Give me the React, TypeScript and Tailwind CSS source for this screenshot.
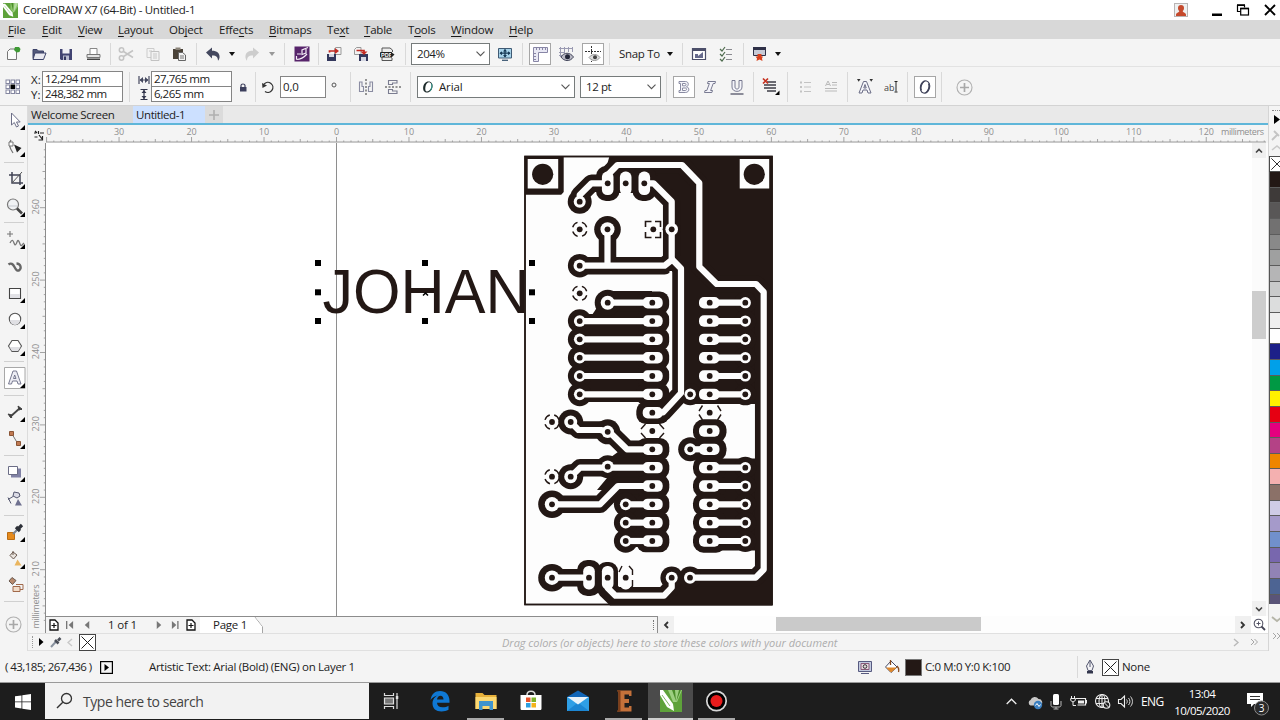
import React from "react";
import clsx from "clsx";

type BoxProps = {
  className?: string;
  children?: React.ReactNode;
};

/* small helpers ------------------------------------------------ */

const Cell = ({ className, children }: BoxProps) => (
  <div className={clsx("flex shrink-0 items-center justify-center", className)}>{children}</div>
);

const Sep = ({ className }: BoxProps) => (
  <div className={clsx("w-px shrink-0 bg-[#d9d9d9]", className)} />
);

const HSep = ({ className }: BoxProps) => (
  <div className={clsx("h-px w-5 shrink-0 bg-[#d0d0d0]", className)} />
);

const Ico = ({ s = 16, children }: { s?: number; children: React.ReactNode }) => (
  <svg width={s} height={s} viewBox={`0 0 ${s} ${s}`} fill="none" className="block shrink-0">
    {children}
  </svg>
);

const Caret = () => (
  <svg width="6" height="4" viewBox="0 0 6 4" className="block">
    <path d="M0 0h6L3 4z" fill="#111" />
  </svg>
);

const Chevron = () => (
  <svg width="9" height="6" viewBox="0 0 9 6" className="block" fill="none">
    <path d="M.5.7l4 4 4-4" stroke="#555" strokeWidth="1.1" />
  </svg>
);

const NoColor = ({ w = 17 }: { w?: number }) => (
  <svg width={w} height={w} viewBox="0 0 17 17" className="block shrink-0">
    <rect x=".5" y=".5" width="16" height="16" fill="#fff" stroke="#444" />
    <path d="M2.5 2.5l12 12M14.5 2.5l-12 12" stroke="#222" strokeWidth="1" />
  </svg>
);

// little black corner that marks a flyout
const Fly = () => <path d="M21 16v5h-5z" fill="#000" />;

const CorelLogo = ({ s }: { s: number }) => (
  <svg width={s} height={s} viewBox="0 0 22 22" className="block shrink-0">
    <rect width="22" height="22" fill="#5ea23a" />
    <path d="M11 0h11v5l-5 8-2 1-4-5z" fill="#8cc46a" />
    <path d="M17 0h5l-6 13h-1z" fill="#b5dba0" />
    <path d="M12 0h3v12z" fill="#4b8d2b" />
    <path d="M0 1l3 0 11 13 1 6-6-2L0 6z" fill="#fff" />
    <path d="M2 4l9 11" stroke="#8fbf72" strokeWidth=".8" />
  </svg>
);

/* title + menu -------------------------------------------------- */

const TitleBar = () => (
  <header className="flex h-5 shrink-0 items-center bg-white">
    <div className="ml-[3px] mt-px">
      <CorelLogo s={15} />
    </div>
    <span className="ml-[5px] text-[11.5px] tracking-[-0.28px] text-[#222]">
      CorelDRAW X7 (64-Bit) - Untitled-1
    </span>
    <div className="ml-auto flex items-center">
      <Cell className="w-4">
        <svg width="14" height="14" viewBox="0 0 14 14">
          <rect x=".5" y=".5" width="13" height="13" fill="#eef0f0" stroke="#b9b4b4" />
          <path d="M7 2c2 0 3 1.300 3 3 0 1.500-.6 2.500-1.300 3 .1 1.500 2.800 1.500 3.300 3.500V13H2v-1.500C2.500 9.500 5.200 9.500 5.300 8 4.600 7.500 4 6.500 4 5c0-1.700 1-3 3-3z" fill="#c5492c" />
        </svg>
      </Cell>
      <Cell className="ml-[18px] w-5">
        <svg width="12" height="14" viewBox="0 0 12 14">
          <path d="M1 10.500h10v2.500H1z" fill="#000" />
        </svg>
      </Cell>
      <Cell className="ml-2 w-4">
        <svg width="14" height="14" viewBox="0 0 14 14" fill="none" stroke="#000">
          <path d="M4.500 8.500h-3v-6h7v2" strokeWidth="1.200" />
          <path d="M1 2h8" strokeWidth="1.600" />
          <rect x="4.700" y="5.500" width="7.800" height="6.500" strokeWidth="1.200" />
          <path d="M4.200 5.500h8.800" strokeWidth="1.600" />
        </svg>
      </Cell>
      <Cell className="ml-[11px] mr-[2px] w-4">
        <svg width="12" height="12" viewBox="0 0 12 12" fill="none">
          <path d="M1 1l10 10M11 1L1 11" stroke="#000" strokeWidth="1.900" />
        </svg>
      </Cell>
    </div>
  </header>
);

// [before, underlined, after, width]
const menus: [string, string, string, string][] = [
  ["", "F", "ile", "w-[34px]"],
  ["", "E", "dit", "w-[36px]"],
  ["", "V", "iew", "w-[40px]"],
  ["", "L", "ayout", "w-[51px]"],
  ["Ob", "j", "ect", "w-[50px]"],
  ["Effe", "c", "ts", "w-[50px]"],
  ["", "B", "itmaps", "w-[58px]"],
  ["Te", "x", "t", "w-[37px]"],
  ["", "T", "able", "w-[44px]"],
  ["T", "o", "ols", "w-[43px]"],
  ["", "W", "indow", "w-[58px]"],
  ["", "H", "elp", "w-[40px]"],
];

const MenuBar = () => (
  <nav className="flex h-[19px] shrink-0 items-center bg-[#d8d8d8] pl-2 pt-px text-[11.5px] tracking-[-0.2px] text-[#1a1a1a]">
    {menus.map(([a, u, b, w]) => (
      <span key={a + u + b} className={clsx("shrink-0 whitespace-nowrap", w)}>
        {a}
        <span className="underline underline-offset-2">{u}</span>
        {b}
      </span>
    ))}
  </nav>
);

/* standard toolbar ---------------------------------------------- */

const StandardBar = () => (
  <div className="flex h-7 shrink-0 items-center border-b border-[#e2e2e2] bg-[#f4f4f4] pt-[3px] text-[11.5px] text-[#222]">
    <Cell className="w-[25px]">
      <Ico>
        <path d="M2.500 5.500L5 3h6.500v10.500h-9z" fill="#fbfbfb" stroke="#777" />
        <path d="M10 1h4l1.500 2-1 3-3 .5L9 4z" fill="#3f9a35" />
      </Ico>
    </Cell>
    <Cell className="w-[27px]">
      <Ico>
        <path d="M2 12.500V3.500h4l1.500 1.500h5v2" fill="#53597a" stroke="#3c4268" />
        <path d="M4 7h11l-2.500 6.500H2z" fill="#e9e9f0" stroke="#3c4268" />
      </Ico>
    </Cell>
    <Cell className="w-[27px]">
      <Ico>
        <path d="M2 3h12v11H3l-1-1z" fill="#414472" />
        <path d="M4.500 3h7v4.500h-7z" fill="#f0f0f5" />
        <path d="M5 9.500h6V14H5z" fill="#b9bcd0" />
        <path d="M6 10.500h2V14H6z" fill="#33365f" />
      </Ico>
    </Cell>
    <Cell className="w-[27px]">
      <Ico>
        <path d="M5 2.500h7v6H5z" fill="#fff" stroke="#888" />
        <path d="M2 8.500h13v3H2z" fill="#e5e5e5" stroke="#777" />
        <path d="M2 12.500h13v1.500H2z" fill="#444" />
      </Ico>
    </Cell>
    <Sep className="ml-1 h-[22px]" />
    <Cell className="w-[29px]">
      <Ico>
        <g stroke="#c4c4c4" strokeWidth="1.500">
          <circle cx="3.500" cy="4" r="2.200" />
          <circle cx="3.500" cy="12" r="2.200" />
          <path d="M5.500 5.500L15 11.500M5.500 10.500L15 4.500" />
        </g>
      </Ico>
    </Cell>
    <Cell className="w-[25px]">
      <Ico>
        <path d="M2 2.500h7v9H2z" stroke="#ccc" />
        <path d="M6 5.500h8v9H6z" fill="#f2f2f2" stroke="#c2c2c2" />
        <path d="M8 8h4M8 10h4M8 12h4M4 5h3" stroke="#c8c8c8" />
      </Ico>
    </Cell>
    <Cell className="w-[27px]">
      <Ico>
        <path d="M2 3h10v10H2z" fill="#4a4238" />
        <path d="M4.500 1.500h5v2.500h-5z" fill="#8a8378" />
        <path d="M7.500 6.500h4l3 2.500v5.500h-7z" fill="#f3f3f3" stroke="#666" />
        <path d="M9 10h4M9 12h4" stroke="#777" />
      </Ico>
    </Cell>
    <Sep className="ml-1 h-[22px]" />
    <Cell className="w-[31px]">
      <Ico>
        <path d="M1 6.500L7 1.500v3.200c5 0 8 2.300 7.500 7-.2 1.300-.8 2.300-1.500 3 0-4-2-5.500-6-5.300v3z" fill="#44485f" />
      </Ico>
    </Cell>
    <Cell className="w-2">
      <Caret />
    </Cell>
    <Cell className="w-8">
      <Ico>
        <path d="M15 6.500L9 1.500v3.200c-5 0-8 2.300-7.500 7 .2 1.300.8 2.300 1.500 3 0-4 2-5.500 6-5.300v3z" fill="#cdcdcd" />
      </Ico>
    </Cell>
    <Cell className="w-2 opacity-40">
      <Caret />
    </Cell>
    <Sep className="ml-2 h-[22px]" />
    <Cell className="w-[33px]">
      <Ico>
        <path d="M.5.500h15v15H.5z" fill="#57246b" />
        <path d="M14 1.500L8 4v4.500l4-1.500V3M3 8h4M2.500 13.500c4 0 7-1.500 10.500-5.500M2.500 13.500V10" stroke="#f4ecf7" strokeWidth="1.200" />
      </Ico>
    </Cell>
    <Sep className="h-[22px]" />
    <Cell className="w-[29px]">
      <Ico>
        <path d="M8.500 2.500L10 1.500h5v7h-6.500z" fill="#f2f2f2" stroke="#999" />
        <path d="M1 8h9v7H1z" fill="#33375c" />
        <path d="M3 8h5v3H3z" fill="#d5d7e2" />
        <path d="M3.500 6.500V5h6" stroke="#c22a22" strokeWidth="1.700" />
        <path d="M9 2l4 3-4 3z" fill="#c22a22" />
      </Ico>
    </Cell>
    <Cell className="w-[26px]">
      <Ico>
        <path d="M1.500 3.500l2-2H8v7H1.500z" fill="#f2f2f2" stroke="#999" />
        <path d="M6 8h9v7H6z" fill="#33375c" />
        <path d="M8 11h5v4H8z" fill="#d5d7e2" />
        <path d="M3.500 4.500H11v1.500" stroke="#c22a22" strokeWidth="1.700" />
        <path d="M7.500 5.500h7L11 9z" fill="#c22a22" />
      </Ico>
    </Cell>
    <Cell className="w-[26px]">
      <Ico>
        <path d="M3 6V2h8l2.500 2v2M3 10v4.500h10V12" fill="#ececec" stroke="#555" />
        <rect x="1" y="6" width="12" height="5.500" rx="1" fill="#222" />
        <text x="2" y="10.800" fontSize="5.500" fontWeight="bold" fill="#fff" fontFamily="Liberation Sans, sans-serif">
          PDF
        </text>
        <path d="M12 6l3.500 2.500L12 12z" fill="#222" />
      </Ico>
    </Cell>
    <Sep className="ml-[5px] h-[22px]" />
    <div className="ml-[5px] flex h-[22px] w-[79px] shrink-0 items-center justify-between border border-[#767b7b] bg-white pl-[5px] pr-1">
      <span className="tracking-[-0.45px]">204%</span>
      <Chevron />
    </div>
    <Cell className="w-[30px]">
      <Ico>
        <path d="M1.500 2.500h13v9.500h-13z" fill="#a8d3ea" stroke="#3f5a74" />
        <path d="M8 3.500v7.500M3 7.200h10" stroke="#173a55" strokeWidth="1.300" />
        <path d="M6 5.500L8 3l2 2.500zM6 9l2 2.500L10 9zM5 5.200L2.500 7.200 5 9.200zM11 5.200l2.500 2-2.500 2z" fill="#173a55" />
        <path d="M5 14.300h6" stroke="#3f5a74" strokeWidth="1.300" />
      </Ico>
    </Cell>
    <Sep className="ml-[2px] h-[22px]" />
    <Cell className="ml-[6px] h-[22px] w-[22px] border border-[#a6a6a6] bg-white">
      <Ico>
        <path d="M1.500 1.500h14v5h-9v9h-5z" fill="#e8e8f4" stroke="#8886a6" />
        <path d="M4.500 2v2M7.500 2v2M10.500 2v2M13.500 2v2M2 7.500h2M2 10.500h2M2 13.500h2" stroke="#8886a6" />
      </Ico>
    </Cell>
    <Cell className="w-[30px]">
      <Ico>
        <path d="M2.500 1v10M6.500 1v6M10.500 1v5M14.500 1v5M1 2.500h14M1 6.500h6M1 9.500h4" stroke="#9a9ab2" />
        <path d="M3 11c3-5 9-5 12.500 0-3.500 5-9.500 4.500-12.500 0z" fill="#b8b8c4" stroke="#44475c" />
        <circle cx="9.500" cy="10.800" r="2.500" fill="#222538" />
      </Ico>
    </Cell>
    <Cell className="ml-px h-[22px] w-[22px] border border-[#a6a6a6] bg-white">
      <Ico>
        <path d="M6.500 0v16" stroke="#333" strokeDasharray="2 1" />
        <path d="M0 5.500h16" stroke="#333" strokeDasharray="2 1" />
        <path d="M4 11.500c3-4 8-4 11 0-3 4-8 4-11 0z" fill="#ddd" stroke="#999" />
        <circle cx="10" cy="11.300" r="2" fill="#444" />
      </Ico>
    </Cell>
    <Sep className="ml-[5px] h-[22px]" />
    <span className="ml-[9px] w-[47px] shrink-0 whitespace-nowrap tracking-[-0.3px]">Snap To</span>
    <Cell className="w-2">
      <Caret />
    </Cell>
    <Sep className="ml-2 h-[22px]" />
    <Cell className="w-8">
      <Ico>
        <path d="M1.500 2.500h13v11h-13z" fill="#fff" stroke="#4c4f6a" strokeWidth="1.200" />
        <path d="M1 2h14v3H1z" fill="#4c4f6a" />
        <path d="M4 12V8h3v2l5-4v6z" fill="#676b8d" />
      </Ico>
    </Cell>
    <Cell className="w-[22px]">
      <Ico>
        <path d="M8 3.500h6M8 8.500h6M8 13.500h6" stroke="#8a8a90" strokeWidth="1.200" />
        <path d="M2 3l2 2 3-4M2 8l2 2 3-4M2 13l2 2 3-4" stroke="#4d6b4d" strokeWidth="1.200" />
      </Ico>
    </Cell>
    <Sep className="ml-[6px] h-[22px]" />
    <Cell className="w-[30px]">
      <Ico>
        <path d="M2.500 1.500h12v8h-12z" fill="#c7cad6" stroke="#2e3047" />
        <path d="M2 1h13v3H2z" fill="#2e3047" />
        <path d="M6.500 8h4v2.500h1.500l-1 2 .5 2.500-3-1.500-3 1.500.5-2.500-1.500-2h2z" fill="#d8401c" />
      </Ico>
    </Cell>
    <Cell className="w-2">
      <Caret />
    </Cell>
  </div>
);

/* property bar -------------------------------------------------- */

const Pair = ({ a, b }: { a: string; b: string }) => (
  <div className="-mt-px h-[31px] w-[81px] shrink-0 border border-[#858585] bg-white text-[11.5px] leading-[14px] tracking-[-0.5px] text-[#222]">
    <div className="h-[15px] border-b border-[#858585] pl-[2px]">{a}</div>
    <div className="pl-[2px]">{b}</div>
  </div>
);

const grid9 = [0, 5, 10];

const PlusCircle = () => (
  <svg width="17" height="17" viewBox="0 0 17 17" fill="none">
    <circle cx="8.500" cy="8.500" r="7.500" stroke="#b0b0b0" strokeWidth="1.100" />
    <path d="M8.500 4v9M4 8.500h9" stroke="#a8a8a8" strokeWidth="1.700" />
  </svg>
);

const PropertyBar = () => (
  <div className="flex h-[39px] shrink-0 items-center border-b border-[#d3d3d3] bg-[#f4f4f4] pt-[2px] text-[11.5px] text-[#222]">
    <Cell className="w-[26px]">
      <Ico>
        {grid9.map((x) =>
          grid9.map((y) => (
            <rect
              key={`${x}-${y}`}
              x={x + 1}
              y={y + 1}
              width="3.500"
              height="3.500"
              fill={x === 5 && y === 5 ? "#000" : "#fff"}
              stroke={x === 5 && y === 5 ? "#000" : "#8486a0"}
            />
          ))
        )}
      </Ico>
    </Cell>
    <div className="ml-[5px] w-[11px] shrink-0 leading-[15px]">
      <div>X:</div>
      <div>Y:</div>
    </div>
    <Pair a="12,294 mm" b="248,382 mm" />
    <Sep className="ml-[6px] h-[30px]" />
    <div className="ml-[6px] flex w-[15px] shrink-0 flex-col items-center gap-[2px]">
      <svg width="12" height="13" viewBox="0 0 12 13" fill="none">
        <path d="M1 3v8M11 3v8M2 7h8" stroke="#45485f" strokeWidth="1.200" />
        <path d="M5 4v6L1.500 7zM7 4v6l3.500-3z" fill="#45485f" />
      </svg>
      <svg width="12" height="13" viewBox="0 0 12 13" fill="none">
        <path d="M2.500 1.500h7M2.500 11.500h7M6 2v9" stroke="#33364c" strokeWidth="1.200" />
        <path d="M3.500 5h5L6 2zM3.500 8h5L6 11z" fill="#33364c" />
      </svg>
    </div>
    <Pair a="27,765 mm" b="6,265 mm" />
    <Cell className="w-[22px]">
      <svg width="8" height="9" viewBox="0 0 8 9" fill="none">
        <path d="M2 4V2.500C2 .5 6 .5 6 2.500V4" stroke="#3c3f5c" strokeWidth="1.200" />
        <path d="M1 4h6.500v4.500H1z" fill="#3c3f5c" />
      </svg>
    </Cell>
    <Sep className="ml-px h-[30px]" />
    <Cell className="w-6">
      <Ico s={14}>
        <path d="M3 4.200A5 5 0 1 1 4 11.500" stroke="#333" strokeWidth="1.300" />
        <path d="M1.500 8L1 3l5 2.500z" fill="#333" />
      </Ico>
    </Cell>
    <div className="flex h-[22px] w-[46px] shrink-0 items-center border border-[#858585] bg-white pl-[2px] tracking-[-0.2px]">
      0,0
    </div>
    <Cell className="w-4 pb-1">
      <svg width="6" height="6" viewBox="0 0 6 6">
        <circle cx="3" cy="3" r="2" fill="none" stroke="#555" />
      </svg>
    </Cell>
    <Sep className="ml-2 h-[30px]" />
    <Cell className="w-[30px]">
      <Ico>
        <path d="M8 0v16" stroke="#333" strokeDasharray="2 1.500" />
        <path d="M1.500 3v9.500h4v-5h-1.500V3zM14.500 3v9.500h-4v-5h1.500V3z" stroke="#8a8ca2" strokeWidth="1.100" />
      </Ico>
    </Cell>
    <Cell className="w-[23px]">
      <Ico>
        <path d="M0 8h16" stroke="#333" strokeDasharray="2 1.500" />
        <path d="M12 1.500H3.500v4h4V4H12zM12 14.500H3.500v-4h4V12H12z" stroke="#7a7c90" strokeWidth="1.100" />
      </Ico>
    </Cell>
    <Sep className="ml-[6px] h-[30px]" />
    <div className="ml-[6px] flex h-[22px] w-[158px] shrink-0 items-center border border-[#767b7b] bg-white pl-1 pr-1">
      <svg width="12" height="14" viewBox="0 0 12 14" className="mr-[5px]">
        <path fillRule="evenodd" d="M6.500 1.500C9.500 1.500 11 4 10.500 7S8 12.500 5 12.500.8 10 1.200 7s2.300-5.500 5.300-5.500zM6.800 2.300C5 2.500 3.800 4.500 3.400 7s0 4.600 1.500 4.600S9 9.500 9.500 7s-.900-4.800-2.700-4.700z" fill="#1d2b2b" />
        <path d="M9.500 3.500c.8 2 .5 5-1.500 7.500" stroke="#2f9a8d" fill="none" />
      </svg>
      <span className="tracking-[-0.15px]">Arial</span>
      <span className="ml-auto">
        <Chevron />
      </span>
    </div>
    <div className="ml-[5px] flex h-[22px] w-[81px] shrink-0 items-center justify-between border border-[#767b7b] bg-white pl-[5px] pr-1">
      <span className="tracking-[-0.4px]">12 pt</span>
      <Chevron />
    </div>
    <Sep className="ml-[5px] h-[30px]" />
    <Cell className="ml-[6px] h-[22px] w-[22px] border border-[#a6a6a6] bg-white">
      <Ico>
        <path fillRule="evenodd" d="M3 2.500h6.500c3.500 0 3.500 4.500 1 5.300 3.500.7 3 5.700-1 5.700H3v-2h1.500v-7H3zM6.500 4.500v2.300h2.600c1.200 0 1.200-2.300 0-2.300zM6.500 9v2.500h3c1.300 0 1.300-2.500 0-2.500z" fill="#f4f4fa" stroke="#7d7f98" strokeWidth=".9" />
      </Ico>
    </Cell>
    <Cell className="w-[29px]">
      <Ico>
        <path d="M6 2.500h7.500l-.5 2h-1.800l-2.600 7h1.900l-.6 2H2.500l.5-2h1.800l2.600-7H5.500z" fill="#f4f4fa" stroke="#6b6d86" strokeWidth=".9" />
      </Ico>
    </Cell>
    <Cell className="w-[26px]">
      <Ico>
        <path d="M3 1.500h3v6.500c0 2.700 4 2.700 4 0V1.500h3V8c0 5.800-10 5.800-10 0z" fill="#f4f4fa" stroke="#6b6d86" strokeWidth=".9" />
        <path d="M1.500 15h13" stroke="#44465c" strokeWidth="1.200" />
      </Ico>
    </Cell>
    <Sep className="ml-[3px] h-[30px]" />
    <Cell className="w-[33px]">
      <svg width="20" height="20" viewBox="0 0 20 20" fill="none">
        <path d="M6 5h9M3 8h12M3 11h12M6 14h9" stroke="#3d3d45" strokeWidth="1.300" />
        <path d="M2 1.500l5 5M7 1.500l-5 5" stroke="#c5301f" strokeWidth="1.700" />
        <path d="M18.500 13.500v4.500H14z" fill="#000" />
      </svg>
    </Cell>
    <Sep className="h-[30px]" />
    <Cell className="w-[33px]">
      <Ico>
        <path d="M7 3.500h7M7 8h7M7 12.500h7" stroke="#c3c3c3" strokeWidth="1.200" />
        <path d="M3 2.500h2v2H3zM3 7h2v2H3zM3 11.500h2v2H3z" fill="#c3c3c3" />
      </Ico>
    </Cell>
    <Cell className="w-5">
      <Ico>
        <path d="M9 3.500h5M9 6h5M2 9.500h12M2 12h12" stroke="#b9b9b9" strokeWidth="1.200" />
        <path d="M2.500 7L5 2l2.500 5M3.500 5.500h3" stroke="#b9b9b9" />
      </Ico>
    </Cell>
    <Sep className="ml-[6px] h-[30px]" />
    <Cell className="w-[33px]">
      <Ico s={18}>
        <path fillRule="evenodd" d="M7.500 3.500h3L15 15h-3l-1-3H7l-1 3H3zM9 6.500l-1.200 3.500h2.400z" fill="#f6f6fa" stroke="#6b6d86" />
        <path d="M1 1h3.500L2.700 3.800zM13.500 1H17l-1.800 2.800z" fill="#333" />
      </Ico>
    </Cell>
    <Cell className="w-5">
      <svg width="14" height="16" viewBox="0 0 14 16" fill="none">
        <text x="0" y="11.500" fontSize="9" fill="#444" fontFamily="Open Sans, sans-serif">
          ab
        </text>
        <path d="M12 3v9.500M10.500 2.500h3M10.500 13h3" stroke="#222" />
      </svg>
    </Cell>
    <Sep className="ml-[6px] h-[30px]" />
    <Cell className="ml-[6px] h-[22px] w-[22px] border border-[#a6a6a6] bg-white">
      <Ico>
        <ellipse cx="8" cy="8" rx="4.600" ry="6.200" transform="rotate(14 8 8)" stroke="#40435a" strokeWidth="1.100" />
        <path d="M4.300 11.500C3 8 4.500 4 7.500 2M11.700 4.500c1.300 3.500-.2 7.500-3.200 9.500" stroke="#40435a" strokeWidth="1.500" />
      </Ico>
    </Cell>
    <Sep className="ml-[5px] h-[30px]" />
    <Cell className="w-[45px]">
      <PlusCircle />
    </Cell>
  </div>
);

/* toolbox ------------------------------------------------------- */

const Tool = ({ className, children }: BoxProps) => (
  <Cell className={clsx("w-full", className)}>
    <svg width="22" height="22" viewBox="0 0 22 22" fill="none" className="ml-[2px] block shrink-0">
      {children}
    </svg>
  </Cell>
);

const Toolbox = () => (
  <aside className="flex w-7 shrink-0 flex-col items-center border-r border-[#dcdcdc] bg-[#f4f4f4]">
    <Tool className="h-[27px]">
      <path d="M7.500 4v12l2.800-2.500L12.500 18l2-1-2-4h3.700z" fill="#fff" stroke="#6d6f88" />
      <Fly />
    </Tool>
    <Tool className="h-[27px]">
      <path d="M7 4c-3 4-1.500 8 2 13" stroke="#777" strokeWidth="1.300" />
      <path d="M5 6h4v4H5z" fill="#fff" stroke="#777" />
      <path d="M10 8.500l7.500 3.500-4.500 4.500z" fill="#222" />
      <Fly />
    </Tool>
    <HSep className="mt-[2px]" />
    <Tool className="h-[31px]">
      <path d="M8 4v11h11M5 7h11v10" stroke="#3f4253" strokeWidth="1.500" />
      <path d="M18 4L8 15" stroke="#555" />
      <Fly />
    </Tool>
    <Tool className="h-[25px]">
      <circle cx="9" cy="8.500" r="5.500" fill="#f0f2f4" stroke="#777" strokeWidth="1.200" />
      <path d="M5 10h8" stroke="#c5c9d0" />
      <path d="M13 12.500l5 5" stroke="#444" strokeWidth="2.600" />
      <Fly />
    </Tool>
    <HSep className="mt-[3px]" />
    <Tool className="h-[31px]">
      <path d="M6 3v6M3 6h6" stroke="#777" strokeWidth="1.100" />
      <path d="M6 15c2-4 3-3 4 0s2 2 3-1 2-1 3 2 2 1 4-1" stroke="#777" strokeWidth="1.300" />
      <Fly />
    </Tool>
    <Tool className="h-[25px]">
      <path d="M4.500 8.500C7 6.500 9 8 10.500 11s3 4.500 5 3 1.500-6.500-3-6.500" stroke="#666" strokeWidth="2.300" />
    </Tool>
    <Tool className="h-[27px]">
      <path d="M5.500 6.500h11v10h-11z" fill="#fff" stroke="#444" strokeWidth="1.100" />
      <path d="M6 12h10v4H6z" fill="#e2e2e6" />
      <Fly />
    </Tool>
    <Tool className="h-[26px]">
      <circle cx="11" cy="11" r="5.700" fill="#fff" stroke="#555" strokeWidth="1.100" />
      <path d="M6 12h10a5 5 0 0 1-10 0z" fill="#e0e0e4" />
      <Fly />
    </Tool>
    <Tool className="h-[27px]">
      <path d="M8 5.500h6l3.500 5.500-3.500 5.500H8L4.500 11z" fill="#fff" stroke="#555" strokeWidth="1.100" />
      <path d="M5.500 12h11L14 16H8z" fill="#e0e0e4" />
      <Fly />
    </Tool>
    <HSep className="mt-[2px]" />
    <Tool className="mt-[5px] h-[22px]">
      <path d="M.5.500h20.500v21H.5z" fill="#fff" stroke="#a8a8a8" />
      <path fillRule="evenodd" d="M9 4h3.500L17 17h-3l-1-3H8.500l-1 3h-3zM10.700 8L9.500 11.500h2.500z" fill="#ededf4" stroke="#6b6d86" strokeWidth=".9" />
      <Fly />
    </Tool>
    <HSep className="mt-[6px]" />
    <Tool className="h-[31px]">
      <path d="M6 16L16 7" stroke="#444" strokeWidth="1.800" />
      <path d="M4 13l4 1-1 3zM14 5l1 4 3-1zM5 13l3 4M14 5l4 4" fill="#333" stroke="#444" />
      <Fly />
    </Tool>
    <Tool className="h-6">
      <path d="M8 6l6 10" stroke="#777" />
      <path d="M5.500 3.500h4v4h-4zM12.500 13.500h4v4h-4z" fill="#c07a52" stroke="#8a5435" />
      <Fly />
    </Tool>
    <HSep className="mt-1" />
    <Tool className="h-8">
      <path d="M7 7.500h10v9H7z" fill="#8081a5" />
      <path d="M4.500 5.500h9v8h-9z" fill="#fff" stroke="#6b6d86" />
      <Fly />
    </Tool>
    <Tool className="h-[22px]">
      <path d="M10 4l5 1 1 3-3 2-4-2z" fill="#dcdce6" stroke="#555870" />
      <path d="M9 8.500l-5 3M4 9.500l3 6" stroke="#555870" />
      <path d="M14 11l4 6.500H11z" fill="#6f7190" />
    </Tool>
    <HSep className="mt-[5px]" />
    <Tool className="h-8">
      <path d="M3.500 11.500h7v7h-7z" fill="#e58a1c" stroke="#b96b12" />
      <path d="M9 13l6-6" stroke="#7a8390" strokeWidth="2.200" />
      <path d="M12 6l4 4M15 7l3-3" stroke="#2d3038" strokeWidth="3.200" />
      <Fly />
    </Tool>
    <Tool className="h-[22px]">
      <path d="M9 4l4 3-3.500 4L6 7.500z" fill="#e9e4df" stroke="#6b5a50" />
      <path d="M9 3v4" stroke="#6b5a50" />
      <path d="M13.500 11.500l4 6h-7z" fill="#eab55e" />
      <Fly />
    </Tool>
    <Tool className="h-[30px]">
      <path d="M8 3.500l4 3L8.500 10.500 5 7z" fill="#b98a6c" stroke="#6b5a50" />
      <path d="M9 12.500h7v5H9z" fill="#f2dcc8" stroke="#a1694a" />
      <path d="M12 10.500h7v5h-3" stroke="#a1694a" />
    </Tool>
    <HSep className="mt-px" />
    <Cell className="h-11 w-full">
      <PlusCircle />
    </Cell>
  </aside>
);

/* rulers -------------------------------------------------------- */

const PX_PER_MM = 7.248;
const ORIGIN_X = 336.5;

const hLabels = [-30, -20, -10, 0, 10, 20, 30, 40, 50, 60, 70, 80, 90, 100, 110, 120];
const hTicks = Array.from({ length: 170 }, (_, i) => i - 40);

const HorizontalRuler = () => (
  <svg width="1240" height="18" viewBox="28 125 1240 18" className="block shrink-0 bg-[#f4f4f4]">
    <path d="M34 133h2M38.500 131v3M40 133h4M34.500 137h3M39 135l3.500 4.500M42.500 136v4h-4M35 131l2 2" stroke="#222" fill="none" strokeWidth="1.200" />
    {hTicks.map((t) => {
      const x = ORIGIN_X + t * PX_PER_MM;
      if (x < 46 || x > 1266) return null;
      const len = t % 10 === 0 ? 5 : t % 5 === 0 ? 3 : 1.5;
      return <path key={t} d={`M${x} ${142 - len}v${len}`} stroke="#9a9a9a" strokeWidth=".9" />;
    })}
    <path d="M46 142h1220" stroke="#9c9c9c" strokeWidth="1.200" />
    <g fontSize="9" fill="#8f8f8f" fontFamily="Open Sans, sans-serif">
      <text x="46.500" y="135">0</text>
      {hLabels.map((v) => (
        <text key={v} x={ORIGIN_X + v * PX_PER_MM} y="135" textAnchor="middle">
          {Math.abs(v)}
        </text>
      ))}
      <text x="1221" y="135" textLength="43">
        millimeters
      </text>
    </g>
  </svg>
);

const vLabels = [260, 250, 240, 230, 220, 210];

const VerticalRuler = () => (
  <svg width="18" height="490" viewBox="28 143 18 490" className="block shrink-0 bg-[#f4f4f4]">
    {Array.from({ length: 66 }, (_, i) => 268 - i).map((t) => {
      const y = 207.7 + (260 - t) * 7.24;
      const len = t % 10 === 0 ? 5 : t % 5 === 0 ? 2.5 : 1.2;
      return <path key={t} d={`M${45 - len} ${y}h${len}`} stroke="#9a9a9a" strokeWidth=".9" />;
    })}
    <path d="M45.500 143v490" stroke="#8c8c8c" />
    <g fontSize="9" fill="#8f8f8f" fontFamily="Open Sans, sans-serif">
      {vLabels.map((v) => (
        <text key={v} transform={`translate(39 ${206.7 + (260 - v) * 7.24}) rotate(-90)`} textAnchor="middle">
          {v}
        </text>
      ))}
      <text transform="translate(39 628.500) rotate(-90)" textLength="44">
        millimeters
      </text>
    </g>
  </svg>
);

/* board drawing ------------------------------------------------- */

const INK = "#231815";
const rowY = (i: number) => 302.7 + i * 18.33;

// copper traces, drawn once thick in ink and once thin in white
const traces = [
  "M579.700 201.700V195L591.500 183.300H607.700",
  "M607.700 183.300V175L617.500 165H682L699.300 183V266.700L716.700 284H756L763.700 292V569.500L755.700 577.700H690",
  "M644.300 183.300H653.500L671.700 201.500V260L664.500 265.700H579.700",
  "M671.700 259L681 268.500V393L663 412.500H652.300",
  "M607.500 229.300V264",
  "M552 504.300H600L618 486H652.300",
  "M570.700 422L578.500 430H601L611 433.500L627 449.300H652.300",
  "M570.700 476.700L580 467.700H652.300",
  "M552 577.700H589",
  "M607.700 577.700V588L615.500 595.700H664L671.700 587.500V577.700",
  "M690 449.300H709.700",
  "M607.700 302.700H652.300",
];

// rows that join the two pad columns
const leftRows = [1, 2, 3, 4, 5];
const leftLow = [11, 12, 13];
const rightRows = [0, 1, 2, 3, 4, 5, 9, 10, 11, 12, 13];

type Pad = [number, number, number, number]; // x, y, pad radius, halo radius

const pads: Pad[] = [
  [579.7, 201.7, 6, 12],
  [607.5, 229.3, 7, 13.3],
  [671.7, 229.3, 6.3, 9],
  [579.7, 265.7, 6.2, 11.8],
  [607.7, 302.7, 7, 13],
  [690.2, 394.3, 5.7, 11],
  [570.7, 422, 6.5, 12.5],
  [607.7, 431.8, 6.2, 12.5],
  [607.7, 466.7, 6.2, 11.5],
  [570.7, 476.7, 6.5, 12.5],
  [552, 504.3, 7.2, 13.8],
  [690.2, 449.3, 6, 12],
  [552, 577.7, 7.2, 13.8],
  [671.7, 577.7, 6, 11.3],
  [690, 577.7, 6, 11.3],
  ...leftRows.map((i): Pad => [579.7, rowY(i), 5.8, 11.8]),
  ...leftLow.map((i): Pad => [625.7, rowY(i), 5.8, 11.8]),
  ...rightRows.map((i): Pad => [745.3, rowY(i), 5.6, 11]),
];

const vertPads = [
  [607.7, 183.3],
  [625.7, 183.3],
  [644.3, 183.3],
  [589, 577.7],
  [607.7, 577.7],
  [625.7, 577.7],
];

const holes: [number, number][] = [
  ...pads.map(([x, y]): [number, number] => [x, y]),
  ...vertPads.map(([x, y]): [number, number] => [x, y]),
  ...Array.from({ length: 14 }, (_, i): [number, number] => [652.3, rowY(i)]),
  ...Array.from({ length: 14 }, (_, i): [number, number] => [709.7, rowY(i)]),
  [579.7, 229.3],
  [579.7, 293.3],
  [552, 422],
  [552, 476.7],
  [653.3, 229.3],
];

const reliefs = [
  [579.7, 229.3],
  [579.7, 293.3],
  [552, 422],
  [552, 476.7],
];

const Board = () => (
  <g>
    <rect x="525" y="156.500" width="247" height="448" fill="#fdfdfd" stroke={INK} strokeWidth="1.500" />

    {/* ground areas */}
    <g fill={INK}>
      <path d="M525 156h38.700v36l-2.500 2.700H525z" />
      <path d="M609.500 156H772.500V605.500H610L600 595.700H664L672 583H755V404H690L681 392V268L672 258V200L662 193H607V165z" />
      <path d="M579.700 314H652v88H579.700z" />
      <path d="M608 291h44v24h-60z" />
      <path d="M622 449h38v98H626V505l-8-15H597l10-12V460z" />
      <path d="M700 458.500h57V550.500H700z" />
    </g>

    {/* isolation around the traces */}
    <g stroke={INK} fill="none" strokeWidth="17.500" strokeLinejoin="round">
      {traces.map((d) => (
        <path key={d} d={d} />
      ))}
    </g>
    <g fill={INK}>
      {pads.map(([x, y, , h]) => (
        <circle key={`${x}-${y}`} cx={x} cy={y} r={h} />
      ))}
      {[0, 1, 2, 3, 4, 5, 6, 8, 9, 10, 11, 12, 13].map((i) => (
        <rect key={i} x="636.300" y={rowY(i) - 11.3} width="33" height="22.600" rx="9.500" />
      ))}
      {[7, 8, 9, 10, 11, 12, 13].map((i) => (
        <rect key={i} x="693" y={rowY(i) - 11.7} width="33.500" height="23.400" rx="10.500" />
      ))}
      <rect x="596" y="166" width="23.500" height="35" rx="10" />
      <rect x="632.500" y="166" width="23.500" height="35" rx="10" />
      <rect x="577" y="560" width="24" height="36" rx="10.500" />
      <rect x="597" y="562" width="21" height="36" rx="9" />
    </g>
    {/* gap beside the long trace */}
    <path d="M672 271v115l-2.500 5.500V271z" fill="#fdfdfd" />

    {/* copper */}
    <g stroke="#fdfdfd" fill="none" strokeWidth="6.200" strokeLinejoin="round">
      {traces.map((d) => (
        <path key={d} d={d} />
      ))}
      {leftRows.map((i) => (
        <path key={i} d={`M579.700 ${rowY(i)}H652`} />
      ))}
      {leftLow.map((i) => (
        <path key={i} d={`M625.700 ${rowY(i)}H652`} />
      ))}
      {rightRows.map((i) => (
        <path key={i} d={`M709.700 ${rowY(i)}H745`} />
      ))}
    </g>
    <g fill="#fdfdfd">
      {pads.map(([x, y, r]) => (
        <circle key={`${x}-${y}`} cx={x} cy={y} r={r} />
      ))}
      {Array.from({ length: 14 }, (_, i) => (
        <g key={i}>
          <rect x="642.700" y={rowY(i) - 5.7} width="20" height="11.400" rx="5" />
          <rect x="699" y={rowY(i) - 5.7} width="20.500" height="11.400" rx="5" />
        </g>
      ))}
      {vertPads.map(([x, y]) => (
        <rect key={`${x}-${y}`} x={x - 5.8} y={y - 11.7} width="11.600" height="23.400" rx="5.300" />
      ))}
      <rect x="527.700" y="159" width="30.500" height="29.500" />
      <rect x="739.700" y="159" width="29.500" height="29.500" />
    </g>

    {/* thermal reliefs */}
    <g stroke={INK} fill="none" strokeWidth="1.400">
      {reliefs.map(([x, y]) => (
        <circle key={`${x}-${y}`} cx={x} cy={y} r="7.300" strokeDasharray="7 4.470" strokeDashoffset="-2" />
      ))}
      <path d="M645.500 227v-5.500h6M655 221.500h5.500v5.500M660.500 232v5.500H655M651.500 237.500h-6V232" strokeWidth="1.600" />
      <path d="M641 429l4.500-5M641 433l4.500 5M664 429l-4.500-5M664 433l-4.500 5M699 411l3.500-5.500M699 414.500l3.500 5.500M721 411l-3.500-5.500M721 414.500l-3.500 5.500" />
      <path d="M619 572l3-6M629 566l3.500 4v5M632.500 580v6l-3 4" />
    </g>

    <g fill={INK}>
      {holes.map(([x, y]) => (
        <circle key={`${x}-${y}`} cx={x} cy={y} r="2.900" />
      ))}
      <circle cx="542.700" cy="174.300" r="10.600" />
      <circle cx="754.300" cy="174.300" r="10.600" />
    </g>
    <rect x="525" y="156.500" width="247" height="448" fill="none" stroke={INK} strokeWidth="1.500" />
  </g>
);

const handles: [number, number][] = [
  [318, 263],
  [425, 263],
  [532, 263],
  [318, 292.3],
  [532, 292.3],
  [318, 321],
  [425, 321],
  [532, 321],
];

const Canvas = () => (
  <svg width="1206" height="473" viewBox="46 143 1206 473" className="block shrink-0 bg-white">
    <path d="M336.500 143v473" stroke="#8e8e8e" />
    <Board />
    <text
      x="322.500"
      y="313.300"
      fontSize="63"
      textLength="207"
      lengthAdjust="spacingAndGlyphs"
      fill={INK}
      fontFamily="Liberation Sans, Arial, sans-serif"
    >
      JOHAN
    </text>
    {handles.map(([x, y]) => (
      <rect key={`${x}-${y}`} x={x - 3} y={y - 3} width="6" height="6" fill="#000" />
    ))}
    <path d="M423 295.500l2.500-2.500 2.500 2.500" stroke="#000" strokeWidth="1.500" fill="none" />
  </svg>
);

/* scroll bars and page tabs ------------------------------------- */

const ScrollV = () => (
  <div className="flex h-[473px] w-4 shrink-0 flex-col bg-[#fbfbfb]">
    <Cell className="h-[15px] w-[14px] bg-[#f0f0f0]">
      <svg width="8" height="6" viewBox="0 0 8 6" fill="none">
        <path d="M1 4.500l3-3 3 3" stroke="#444" strokeWidth="1.600" />
      </svg>
    </Cell>
    <div className="mt-[133px] h-[48px] w-[14px] bg-[#cdcdcd]" />
    <Cell className="mt-auto h-[15px] w-[14px] bg-[#f0f0f0]">
      <svg width="8" height="6" viewBox="0 0 8 6" fill="none">
        <path d="M1 1.500l3 3 3-3" stroke="#444" strokeWidth="1.600" />
      </svg>
    </Cell>
  </div>
);

const PageIcon = () => (
  <svg width="10" height="12" viewBox="0 0 10 12" fill="none">
    <path d="M1 1h5l3 3v7H1z" fill="#fff" stroke="#111" strokeWidth="1.300" />
    <path d="M5 4v5M2.500 6.500h5" stroke="#111" strokeWidth="1.200" />
  </svg>
);

const Nav = ({ d, w }: { d: string; w: string }) => (
  <Cell className={w}>
    <svg width="8" height="8" viewBox="0 0 9 9">
      <path d={d} fill="#777" />
    </svg>
  </Cell>
);

const PageBar = () => (
  <div className="flex h-[17px] shrink-0">
    <div className="flex w-[612px] items-center border-r border-t border-[#8c8c8c] bg-[#f4f4f4]">
      <Cell className="w-[15px]">
        <PageIcon />
      </Cell>
      <Nav d="M0 0h1.500v9H0zM8 0v9L3 4.500z" w="w-[17px]" />
      <Nav d="M7 0v9L2 4.500z" w="w-[17px]" />
      <span className="ml-[13px] w-[42px] text-[11.5px] leading-none tracking-[-0.15px] text-[#222]">1 of 1</span>
      <Nav d="M2 0v9l5-4.500z" w="w-[18px]" />
      <Nav d="M1 0v9l5-4.500zM7 0h1.500v9H7z" w="w-[13px]" />
      <Cell className="w-[19px]">
        <PageIcon />
      </Cell>
      <div className="relative flex h-full w-[63px] items-center bg-white pl-[13px] text-[11.5px] leading-none tracking-[-0.25px] text-[#222] [clip-path:polygon(0_0,88%_0,100%_60%,100%_100%,0_100%)]">
        Page 1
        <svg width="9" height="16" viewBox="0 0 9 16" fill="none" className="absolute right-0 top-0">
          <path d="M1 0l7.500 9.500V16" stroke="#a5a5a5" />
        </svg>
      </div>
      <div className="ml-auto mr-[3px] h-[10px] border-l border-dotted border-[#777]" />
    </div>
    <Cell className="w-4 bg-[#f0f0f0]">
      <svg width="6" height="8" viewBox="0 0 6 8" fill="none">
        <path d="M5 1L2 4l3 3" stroke="#333" strokeWidth="1.800" />
      </svg>
    </Cell>
    <div className="flex-1 bg-[#fdfdfd] pl-[102px] pt-px">
      <div className="h-[14px] w-[205px] bg-[#cacaca]" />
    </div>
    <Cell className="w-4 bg-[#f0f0f0]">
      <svg width="6" height="8" viewBox="0 0 6 8" fill="none">
        <path d="M1 1l3 3-3 3" stroke="#333" strokeWidth="1.800" />
      </svg>
    </Cell>
    <Cell className="w-[17px] bg-white">
      <Ico s={13}>
        <circle cx="5.500" cy="5.500" r="4.300" stroke="#556" strokeWidth="1.100" />
        <path d="M3.500 5.500h4M5.500 3.500v4" stroke="#556" />
        <path d="M8.500 8.500L12 12" stroke="#445" strokeWidth="1.800" />
      </Ico>
    </Cell>
  </div>
);

const DocPalette = () => (
  <div className="flex h-[18px] shrink-0 items-center border-y border-[#e0e0e0] bg-[#f4f4f4]">
    <div className="ml-1 h-3 border-l border-dotted border-[#999]" />
    <Cell className="ml-1 w-2">
      <svg width="6" height="8" viewBox="0 0 6 8">
        <path d="M1 0v8l4.500-4z" fill="#000" />
      </svg>
    </Cell>
    <Cell className="ml-1 w-[14px]">
      <Ico s={12}>
        <path d="M1 11l5.500-6" stroke="#8a93a0" strokeWidth="2" />
        <path d="M5 4l3.500 3.500M8 4.500L10.500 2" stroke="#4a4e58" strokeWidth="2.600" />
      </Ico>
    </Cell>
    <Cell className="w-[14px]">
      <svg width="6" height="9" viewBox="0 0 6 9" fill="none">
        <path d="M5 1L1 4.500 5 8" stroke="#c9c9c9" strokeWidth="1.500" />
      </svg>
    </Cell>
    <div className="ml-[2px]">
      <NoColor />
    </div>
    <span className="ml-[406px] whitespace-nowrap text-[11px] italic leading-none tracking-[-0.03px] text-[#adadad]">
      Drag colors (or objects) here to store these colors with your document
    </span>
    <div className="ml-auto mr-[10px] flex items-center gap-[10px]">
      <svg width="7" height="9" viewBox="0 0 7 9" fill="none">
        <path d="M1 1l4 3.500L1 8" stroke="#b9b9b9" strokeWidth="1.400" />
      </svg>
      <svg width="8" height="8" viewBox="0 0 8 8" fill="none">
        <path d="M1 1l3 3-3 3M4.500 1l3 3-3 3" stroke="#a5a5a5" />
      </svg>
    </div>
  </div>
);

/* colour palette on the right ----------------------------------- */

const swatches = [
  "bg-[#231815]",
  "bg-[#3e3a39]",
  "bg-[#595757]",
  "bg-[#727171]",
  "bg-[#898989]",
  "bg-[#9fa0a0]",
  "bg-[#b5b5b6]",
  "bg-[#c9caca]",
  "bg-[#dcdddd]",
  "bg-[#efefef]",
  "bg-white",
  "bg-[#1d2088]",
  "bg-[#00a0e9]",
  "bg-[#009944]",
  "bg-[#fff100]",
  "bg-[#e60012]",
  "bg-[#e4007f]",
  "bg-[#b44286]",
  "bg-[#ee8500]",
  "bg-[#f4b0b0]",
  "bg-[#8b7168]",
  "bg-[#cfcce6]",
  "bg-[#a59aca]",
  "bg-[#7190cc]",
  "bg-[#7867ae]",
  "bg-[#9183b5]",
  "bg-[#4d6493]",
];

const Palette = () => (
  <aside className="flex w-3 shrink-0 flex-col overflow-hidden border-l border-[#d5d5d5] bg-[#f4f4f4]">
    <div className="ml-[3px] mt-[4px] h-px w-[10px] border-t border-dotted border-[#888]" />
    <svg width="11" height="45" viewBox="1269 111 11 45" fill="none" className="block shrink-0">
      <path d="M1274 115v9l6-4.500z" fill="#000" />
      <path d="M1272 140l5-5M1274 131l5 5" stroke="#c4c4c4" strokeWidth="1.800" />
      <path d="M1272 150l5-4 5 4" stroke="#c9c9c9" strokeWidth="1.600" />
    </svg>
    <div className="flex w-4 shrink-0 flex-col border-l border-[#555]">
      <div className="-ml-px">
        <NoColor w={16} />
      </div>
      {swatches.map((c) => (
        <div key={c} className={clsx("h-[15.66px] shrink-0 border-b border-[#5c5c5c]", c)} />
      ))}
      <div className="h-[9px] bg-[#5a5478]" />
    </div>
    <svg width="11" height="40" viewBox="1269 604 11 40" fill="none" className="block shrink-0">
      <path d="M1272 617l5 4 5-4" stroke="#b5b5a8" strokeWidth="1.800" />
      <path d="M1273 633l3 3-3 3M1277 633l3 3-3 3" stroke="#a5a5a5" />
    </svg>
  </aside>
);

const Workspace = () => (
  <div className="flex h-[545px] shrink-0">
    <Toolbox />
    <main className="flex w-[1240px] shrink-0 flex-col">
      <div className="flex h-[19px] shrink-0 items-stretch border-b-2 border-[#5fb6d9] bg-[#e9e9e9] text-[11.5px] leading-[18px] tracking-[-0.4px] text-[#222]">
        <div className="w-[105px] bg-[#d9d9d9] pl-[3px]">Welcome Screen</div>
        <div className="w-[72px] bg-[#cce0ff] pl-[3px]">Untitled-1</div>
        <Cell className="w-[18px] bg-[#dbdbdb]">
          <svg width="10" height="10" viewBox="0 0 10 10">
            <path d="M5 0v10M0 5h10" stroke="#b0b0b0" strokeWidth="1.600" />
          </svg>
        </Cell>
      </div>
      <HorizontalRuler />
      <div className="flex shrink-0">
        <VerticalRuler />
        <div className="flex flex-1 flex-col">
          <div className="flex">
            <Canvas />
            <ScrollV />
          </div>
          <PageBar />
        </div>
      </div>
      <DocPalette />
    </main>
    <Palette />
  </div>
);

/* status bar ---------------------------------------------------- */

const StatusBar = () => (
  <div className="flex h-8 shrink-0 items-center border-b border-[#9a9a9a] bg-[#f4f4f4] pt-px text-[11.5px] tracking-[-0.3px] text-[#222]">
    <span className="ml-[5px] w-[95px] shrink-0 whitespace-nowrap tracking-[-0.55px]">( 43,185; 267,436 )</span>
    <svg width="13" height="13" viewBox="0 0 13 13" fill="none" className="shrink-0">
      <rect x=".6" y=".6" width="11.800" height="11.800" stroke="#000" strokeWidth="1.200" />
      <path d="M4.500 3v7l4.500-3.500z" fill="#000" />
    </svg>
    <span className="ml-9 w-[708px] shrink-0 whitespace-nowrap">Artistic Text: Arial (Bold) (ENG) on Layer 1</span>
    <Cell className="w-4">
      <Ico>
        <path d="M1.500 2.500h13v10h-13z" fill="#c3cbe0" stroke="#575a80" />
        <path d="M4 4.500h8v6H4z" fill="#e8d9e0" stroke="#8a5a78" />
        <circle cx="8" cy="7.500" r="1.800" stroke="#333" />
        <path d="M4 14.500h8" stroke="#575a80" />
      </Ico>
    </Cell>
    <Cell className="ml-[11px] w-4">
      <Ico>
        <path d="M7 2l6 6-6 5.500L1.500 8z" fill="#fff" stroke="#444a66" />
        <path d="M2 8.500h11L7 13.500z" fill="#e0882a" />
        <path d="M6.500 1v5M13 7c2 2 2 4 1.500 6" stroke="#8a4a1d" strokeWidth="1.300" />
      </Ico>
    </Cell>
    <div className="ml-[5px] h-[17px] w-[17px] shrink-0 border border-[#777] bg-[#231815]" />
    <span className="ml-[3px] w-[152px] shrink-0 whitespace-nowrap tracking-[-0.38px]">C:0 M:0 Y:0 K:100</span>
    <Sep className="h-[22px]" />
    <Cell className="ml-1 w-4">
      <svg width="10" height="16" viewBox="0 0 10 16" fill="none">
        <path d="M5 1L1.500 7l1.500 4.500h4L8.500 7z" fill="#f3f3f6" stroke="#555870" />
        <path d="M5 2v6" stroke="#555870" />
        <path d="M2 12h6v2.500H2z" fill="#33364c" />
      </svg>
    </Cell>
    <div className="ml-1">
      <NoColor />
    </div>
    <span className="ml-[3px]">None</span>
  </div>
);

/* windows taskbar ----------------------------------------------- */

const TaskApp = ({ className, children }: BoxProps) => (
  <div className={clsx("flex h-full shrink-0 items-center justify-center border-b-2", className)}>
    <svg width="24" height="24" viewBox="0 0 24 24" fill="none" className="block">
      {children}
    </svg>
  </div>
);

const Taskbar = () => (
  <footer className="flex h-[37px] shrink-0 items-center bg-[#1d1d1d] text-white">
    <Cell className="w-[45px]">
      <svg width="16" height="16" viewBox="0 0 16 16" fill="#fff">
        <path d="M0 2.300L6.500 1.400v6.100H0zM7.300 1.300L16 0v7.500H7.300zM0 8.300h6.500v6.200L0 13.600zM7.300 8.300H16V16l-8.700-1.300z" />
      </svg>
    </Cell>
    <div className="mb-px flex h-9 w-[324px] shrink-0 items-center bg-[#f2f2f2]">
      <svg width="17" height="17" viewBox="0 0 17 17" fill="none" className="mb-px ml-[11px]">
        <circle cx="10.500" cy="6.500" r="5" stroke="#333" strokeWidth="1.300" />
        <path d="M6.800 10.200L1 16" stroke="#333" strokeWidth="1.400" />
      </svg>
      <span className="ml-[10px] whitespace-nowrap text-[14px] tracking-[-0.45px] text-[#444]">Type here to search</span>
    </div>
    <TaskApp className="w-[44px] border-transparent">
      <path d="M5.500 9h9v6h-9z" fill="#777" stroke="#ddd" strokeWidth="1.200" />
      <path d="M5.500 4v2.500h9V4M5.500 20v-2.500h9V20M18 4v3M18 10v10" stroke="#ddd" strokeWidth="1.200" />
      <path d="M16.800 7h2.500v3h-2.500z" fill="#ddd" />
    </TaskApp>
    <TaskApp className="ml-[5px] w-[44px] border-transparent">
      <path d="M2.500 11C3.500 5 7 2 12 2c6 0 9.500 4 9.500 10v1.800H9c.2 3 2.300 4.500 5.500 4.500 2.500 0 4.500-.7 6-1.600v4c-2 1.200-4.300 1.700-7 1.700-5.500 0-9-3-9-8 0-4 2.500-6.800 5.500-8.200-3 .7-5.700 2.300-7.500 4.800zM9 10.500h6.500C15.500 8 14.300 6.700 12.500 6.700S9.300 8 9 10.500z" fill="#0f78d4" fillRule="evenodd" />
    </TaskApp>
    <TaskApp className="ml-[5px] w-[37px] border-[#a9a9a9]">
      <path d="M1.500 4h7l2 2h12v14h-21z" fill="#e6b03a" />
      <path d="M1.500 8h21v12h-21z" fill="#fbd872" />
      <path d="M5 12h14v9h-3.500v-4h-7v4H5z" fill="#3f94cd" />
    </TaskApp>
    <TaskApp className="ml-[5px] w-[44px] border-transparent">
      <path d="M8 6c0-5 8-5 8 0" stroke="#ddd" strokeWidth="1.500" />
      <path d="M1.500 6h21v13.500c0 1-.7 1.500-1.500 1.500H3c-1 0-1.500-.5-1.500-1.500z" fill="#fff" />
      <path d="M7 8.500h4.500V13H7z" fill="#e8512a" />
      <path d="M12.500 8.500H17V13h-4.500z" fill="#7db32b" />
      <path d="M7 14h4.500v4.500H7z" fill="#2b9fe0" />
      <path d="M12.500 14H17v4.500h-4.500z" fill="#f4b41d" />
    </TaskApp>
    <TaskApp className="ml-[3px] w-[44px] border-transparent">
      <path d="M1 8l11-6.500L23 8v3H1z" fill="#1166b8" />
      <path d="M1 8h22v14H1z" fill="#2f9fe6" />
      <path d="M1 22l11-8.500L23 22z" fill="#1c86d3" />
      <path d="M1.500 8h21L12 15.500z" fill="#eaf3fa" />
    </TaskApp>
    <TaskApp className="ml-[5px] w-[37px] border-[#a9a9a9]">
      <path d="M5 1.500h14.500v5.500H17V5.500h-4.500V10H17v4h-4.500v4.500H17V17h2.500v5.500H5l1.500-2v-17z" fill="#c4713a" />
      <path d="M5 1.500h3.500v21H5l1.500-2v-17z" fill="#7d3d18" />
    </TaskApp>
    <TaskApp className="ml-[6px] w-[45px] border-[#cfcfcf] bg-[#4b4b4b]">
      <rect x="1" y="1" width="22" height="22" fill="#5ea23a" />
      <path d="M9 1h14l-5 12h-4z" fill="#9ccf80" />
      <path d="M13 1h3l1 11zM20 1h2l-5 12z" fill="#4b8d2b" />
      <path d="M1 1h3l10 14 1 7-7-4-7-12z" fill="#fff" />
      <path d="M3 6l8 11" stroke="#5ea23a" strokeWidth=".8" />
    </TaskApp>
    <TaskApp className="ml-[5px] w-[37px] border-[#a9a9a9]">
      <circle cx="11.500" cy="12" r="9.700" fill="#000" stroke="#d8d8d8" strokeWidth="1.700" />
      <circle cx="11.500" cy="12" r="6" fill="#e81c1c" />
    </TaskApp>

    <div className="ml-auto flex h-full items-center">
      <Cell className="w-6">
        <svg width="11" height="7" viewBox="0 0 11 7" fill="none">
          <path d="M.7 6l4.800-4.800L10.300 6" stroke="#eee" strokeWidth="1.300" />
        </svg>
      </Cell>
      <Cell className="w-[23px]">
        <Ico>
          <path d="M3.500 11.500a3 3 0 0 1 0-5.500 4.500 4.500 0 0 1 8-1 3.500 3.500 0 0 1 2 6.500z" fill="#c9c9c9" />
          <circle cx="11" cy="11" r="4.200" fill="#3b7fc0" />
          <path d="M8.500 11.500l1.500-2 1 1.500M13.500 10.500l-1.500 2-1-1.500" stroke="#fff" />
        </Ico>
      </Cell>
      <Cell className="w-5">
        <svg width="12" height="17" viewBox="0 0 12 17" fill="none">
          <rect x="3" y="1" width="6" height="11" rx="1.500" fill="#fff" />
          <path d="M1 8v4.500c0 1 1 1.500 2 1.500h6c1 0 2-.5 2-1.500V8M6 14v2M3.500 16h5" stroke="#bbb" />
        </svg>
      </Cell>
      <Cell className="w-[25px]">
        <Ico s={17}>
          <path d="M5.500 5.500h10v6.500h-8M15.500 7.500h1v2.500h-1" stroke="#eee" strokeWidth="1.200" />
          <path d="M8 7.500h6v3H8z" fill="#eee" />
          <path d="M1.500 3v2M4.500 3v2M.7 5.500h4.600v2L3 9 .7 7.500zM3 9v3.500h3" stroke="#eee" />
        </Ico>
      </Cell>
      <Cell className="w-[22px]">
        <Ico s={17}>
          <g stroke="#eee" strokeWidth="1.100">
            <circle cx="8" cy="8" r="6.500" />
            <ellipse cx="8" cy="8" rx="3" ry="6.500" />
            <path d="M2 5.500h12M2 10.500h8M8 1.500v13" />
          </g>
          <circle cx="12.500" cy="12" r="3.300" fill="#1d1d1d" stroke="#eee" strokeWidth="1.100" />
          <path d="M10.500 10l4 4" stroke="#eee" />
        </Ico>
      </Cell>
      <Cell className="w-[24px]">
        <Ico s={17}>
          <path d="M1.500 6.500H4L7.500 3v11L4 10.500H1.500z" stroke="#eee" strokeWidth="1.100" />
          <path d="M9.500 6.500c1 1.200 1 2.800 0 4M11.500 5c1.900 2.200 1.900 4.800 0 7M13.500 3.500c2.600 3 2.600 7 0 10" stroke="#ddd" />
        </Ico>
      </Cell>
      <span className="ml-[4px] w-[31px] text-[12px] tracking-[-0.6px]">ENG</span>
      <div className="w-[60px] text-center text-[11.5px] leading-[17px] tracking-[-0.55px]">
        <div>13:04</div>
        <div className="whitespace-nowrap">10/05/2020</div>
      </div>
      <Cell className="ml-[12px] mr-2 w-7">
        <svg width="28" height="28" viewBox="0 0 28 28" fill="none">
          <path d="M3 5h16v11H10l-3 3v-3H3z" fill="#fff" />
          <path d="M6 8.500h10M6 11.500h10" stroke="#333" strokeWidth="1.200" />
          <circle cx="17.500" cy="20" r="7" fill="#2a2a2a" stroke="#8a8a8a" />
          <text x="17.500" y="23.700" textAnchor="middle" fontSize="10" fill="#fff" fontFamily="Open Sans, sans-serif">
            3
          </text>
        </svg>
      </Cell>
    </div>
  </footer>
);

const App = () => {
  return (
    <div className="flex h-[720px] w-[1280px] flex-col overflow-hidden bg-[#f4f4f4] font-['Open_Sans','Noto_Sans',sans-serif]">
      <TitleBar />
      <MenuBar />
      <StandardBar />
      <PropertyBar />
      <Workspace />
      <StatusBar />
      <Taskbar />
    </div>
  );
};

export default App;
